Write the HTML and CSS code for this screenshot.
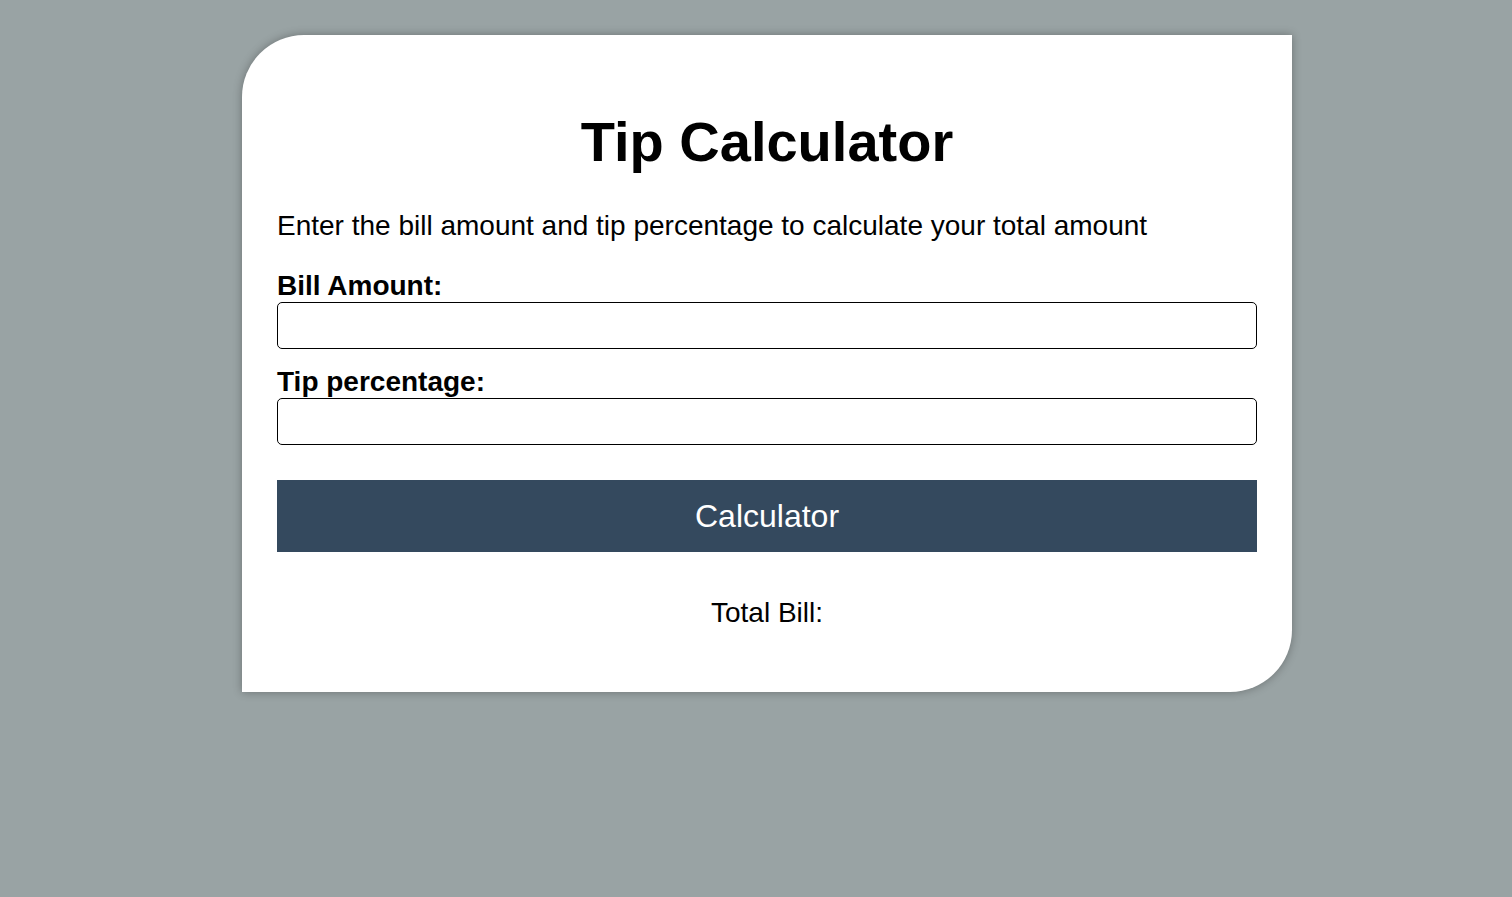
FILE: index.html
```html
<!DOCTYPE html>
<html>
<head>
<meta charset="utf-8">
<link rel="stylesheet" href="styles.css">
</head>
<body>
<div class="card">
  <h1 class="title">Tip Calculator</h1>
  <p class="intro">Enter the bill amount and tip percentage to calculate your total amount</p>
  <label class="label" for="bill">Bill Amount:</label>
  <input class="field" id="bill" type="text">
  <label class="label" for="tip">Tip percentage:</label>
  <input class="field" id="tip" type="text">
  <button class="btn">Calculator</button>
  <p class="total">Total Bill:</p>
</div>
</body>
</html>
```
FILE: styles.css
```css
html, body {
  margin: 0;
  padding: 0;
}
body {
  background: #99a3a4;
  font-family: "Liberation Sans", Arial, sans-serif;
  min-height: 897px;
  padding-top: 35px;
  padding-left: 22px;
  box-sizing: border-box;
}
.card {
  width: 1050px;
  box-sizing: border-box;
  margin: 0 auto;
  background: #fff;
  border-radius: 62px 0;
  padding: 35px 35px 63px;
  box-shadow: 0 0 10px rgba(0, 0, 0, 0.3);
  display: flex;
  flex-direction: column;
}
.title {
  margin: 40px 0 0;
  text-align: center;
  font-size: 56px;
  line-height: 64px;
  font-weight: bold;
}
.intro {
  margin: 36px 0 0;
  font-size: 28px;
  line-height: 32px;
}
.label {
  display: block;
  margin-top: 28px;
  font-size: 28px;
  line-height: 32px;
  font-weight: bold;
}
.field {
  display: block;
  height: 47px;
  box-sizing: border-box;
  border: 1px solid #000;
  border-radius: 5px;
  margin: 0;
  padding: 0 10px;
  font-size: 20px;
}
.field + .label {
  margin-top: 17px;
}
.btn {
  margin-top: 35px;
  height: 72px;
  border: none;
  background: #34495e;
  color: #fff;
  font-family: "Liberation Sans", Arial, sans-serif;
  font-size: 32px;
}
.total {
  margin: 45px 0 0;
  text-align: center;
  font-size: 28px;
  line-height: 32px;
}
```
